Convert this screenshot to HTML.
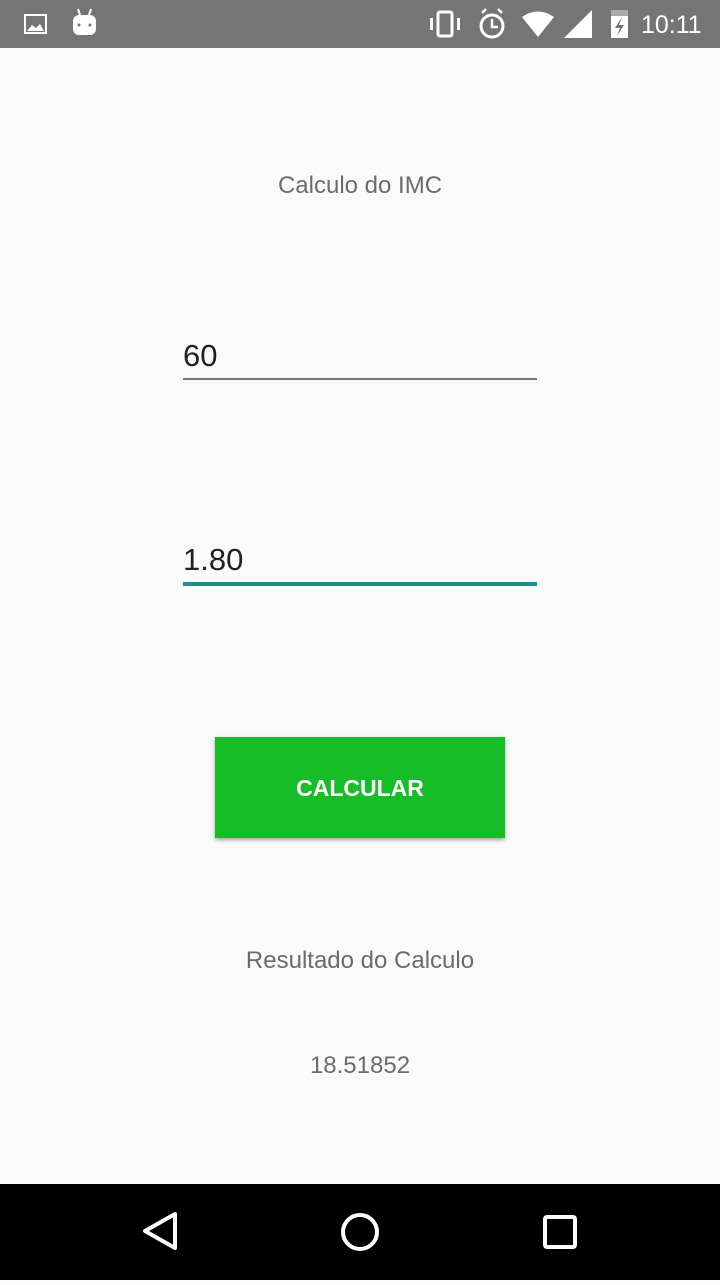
<!DOCTYPE html>
<html><head><style>
body{margin:0;width:720px;height:1280px;background:#fafafa;font-family:"Liberation Sans",sans-serif;position:relative;overflow:hidden}
.sb{position:absolute;top:0;left:0;width:720px;height:48px;background:#757575}
.t{position:absolute;width:720px;text-align:center;color:#6b6b6b}
.nav{position:absolute;top:1184px;left:0;width:720px;height:96px;background:#000}
</style></head><body>
<div class="sb">
<svg width="720" height="48" style="position:absolute;left:0;top:0">
<rect x="25" y="15" width="21" height="18" fill="none" stroke="#fff" stroke-width="2"/>
<path d="M27 31 L32 25 L36 28 L40 24 L44 31Z" fill="#fff"/>
<rect x="73" y="15" width="23" height="20" rx="6" fill="#fff"/>
<line x1="78" y1="9" x2="80" y2="15" stroke="#fff" stroke-width="2"/><line x1="91" y1="9" x2="89" y2="15" stroke="#fff" stroke-width="2"/>
<circle cx="79" cy="25" r="1.5" fill="#757575"/><circle cx="90" cy="25" r="1.5" fill="#757575"/>
<rect x="438" y="12" width="14" height="24" rx="2" fill="none" stroke="#fff" stroke-width="3"/>
<rect x="430" y="18" width="3" height="12" fill="#fff"/><rect x="457" y="18" width="3" height="12" fill="#fff"/>
<circle cx="492" cy="26" r="11" fill="none" stroke="#fff" stroke-width="3"/>
<path d="M492 19 V27 H498" stroke="#fff" stroke-width="2.5" fill="none"/>
<path d="M482 13 L486 9 M502 13 L498 9" stroke="#fff" stroke-width="2.5"/>
<path d="M522 17 Q538 6 554 17 L538 37Z" fill="#fff"/>
<path d="M564 38 L592 10 V38Z" fill="#fff"/>
<rect x="611" y="14" width="17" height="24" fill="#fff"/><rect x="611" y="10" width="17" height="6" fill="#aaa"/>
<path d="M622 17 L615 28 H620 L617 36 L624 25 H619Z" fill="#757575"/>
<text x="641" y="33" font-size="25" fill="#fff" font-family="Liberation Sans">10:11</text>
</svg></div>
<div class="t" style="top:172px;font-size:24px">Calculo do IMC</div>
<div style="position:absolute;left:183px;top:338px;font-size:31px;color:#212121">60</div>
<div style="position:absolute;left:183px;top:378px;width:354px;height:2px;background:#777"></div>
<div style="position:absolute;left:183px;top:542px;font-size:31px;color:#212121">1.80</div>
<div style="position:absolute;left:183px;top:582px;width:354px;height:4px;background:#17918a"></div>
<div style="position:absolute;left:215px;top:737px;width:290px;height:101px;background:#17bd29;box-shadow:0 2px 4px rgba(0,0,0,.35);color:#fff;font-size:23px;font-weight:bold;text-align:center;line-height:103px">CALCULAR</div>
<div class="t" style="top:947px;font-size:24px">Resultado do Calculo</div>
<div class="t" style="top:1052px;font-size:24px">18.51852</div>
<div class="nav"><svg width="720" height="96">
<path d="M175 30 L145 47 L175 64Z" fill="none" stroke="#fff" stroke-width="4" stroke-linejoin="round"/>
<circle cx="360" cy="48" r="17" fill="none" stroke="#fff" stroke-width="4"/>
<rect x="545" y="33" width="30" height="30" rx="2" fill="none" stroke="#fff" stroke-width="4"/>
</svg></div>
</body></html>
